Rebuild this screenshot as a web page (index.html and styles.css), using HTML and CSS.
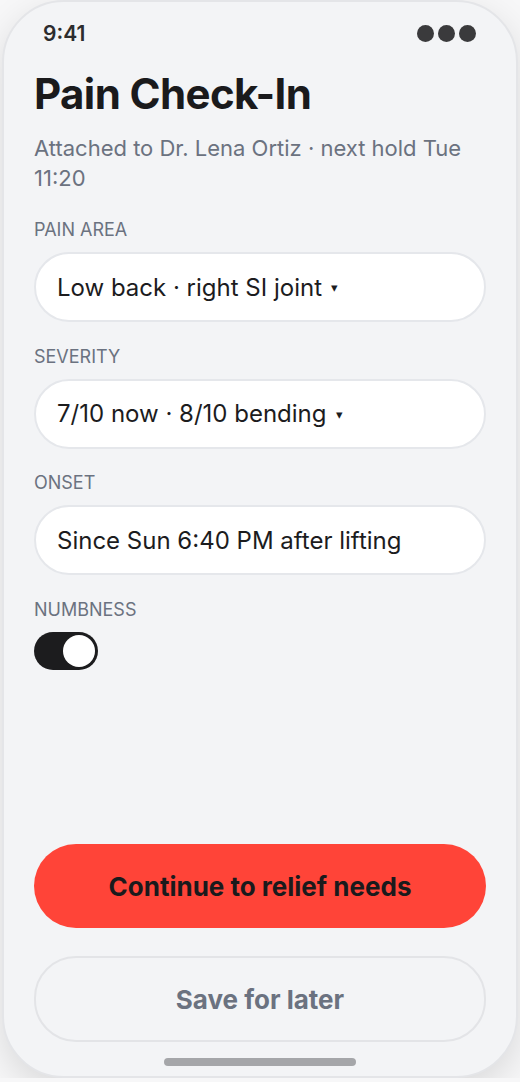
FILE: index.html
```html
<!DOCTYPE html>
<html lang="en">
<head>
  <meta charset="UTF-8">
  <meta name="viewport" content="width=device-width, initial-scale=1.0">
  <title>Pain Check-In</title>
  <link rel="stylesheet" href="styles.css">
</head>
<body>
  <div class="phone">
    <div class="status">
      <span class="time">9:41</span>
      <span class="dots"><i></i><i></i><i></i></span>
    </div>

    <h1 class="title">Pain Check-In</h1>
    <p class="sub">Attached to Dr. Lena Ortiz · next hold Tue 11:20</p>

    <div class="field">
      <div class="label">Pain area</div>
      <div class="input">Low back · right SI joint <span class="caret">▾</span></div>
    </div>
    <div class="field">
      <div class="label">Severity</div>
      <div class="input">7/10 now · 8/10 bending <span class="caret">▾</span></div>
    </div>
    <div class="field">
      <div class="label">Onset</div>
      <div class="input">Since Sun 6:40 PM after lifting</div>
    </div>
    <div class="field">
      <div class="label">Numbness</div>
      <div class="toggle on"><span class="knob"></span></div>
    </div>

    <div class="spacer"></div>

    <button class="btn primary">Continue to relief needs</button>
    <button class="btn ghost">Save for later</button>
    <div class="home"></div>
  </div>
</body>
</html>
```

FILE: styles.css
```css
* { box-sizing: border-box; }
body { margin: 0; background: #f7f7f8; font-family: Inter, "Noto Sans", sans-serif; color: #1c1c1e; }

.phone {
  width: 516px; height: 1078px; margin: 0 2px;
  background: #f3f4f6; border: 2px solid #e4e5e8; border-radius: 62px;
  box-shadow: 0 12px 36px rgba(0,0,0,0.12);
  padding: 0 30px; display: flex; flex-direction: column;
}

.status { display: flex; justify-content: space-between; align-items: center; height: 60px; padding: 2px 10px 0 9px; }
.time { font-size: 21px; font-weight: 600; color: #2c2c2e; }
.dots { display: flex; gap: 4px; }
.dots i { width: 17px; height: 17px; border-radius: 50%; background: #3a3a3c; }

.title { margin: 7px 0 0; font-size: 42px; font-weight: 700; letter-spacing: -0.6px; line-height: 50px; color: #1a1a1c; }
.sub { margin: 14px 0 27px; font-size: 22px; line-height: 30px; color: #6b7280; }

.field { margin-bottom: 24.5px; }
.label { font-size: 18px; line-height: 20px; text-transform: uppercase; color: #6b7280; margin-bottom: 12px; }
.input {
  height: 70px; background: #fff; border: 2px solid #e5e7eb; border-radius: 35px;
  display: flex; align-items: center; padding: 0 21px; font-size: 24px; color: #1c1c1e;
}
.caret { font-size: 13px; margin-left: 9px; }

.toggle { width: 64px; height: 38px; border-radius: 19px; background: #1c1c1e; padding: 3px; display: flex; justify-content: flex-end; }
.knob { width: 32px; height: 32px; border-radius: 50%; background: #fff; }

.spacer { flex: 1; }

.btn { width: 100%; height: 84px; border-radius: 42px; font-family: inherit; font-size: 26px; font-weight: 700; cursor: pointer; }
.primary { background: #ff4438; border: none; color: #1a1a1c; }
.ghost { margin-top: 28px; background: transparent; border: 2px solid #e3e4e7; color: #6b7280; height: 86px; }

.home { width: 192px; height: 8px; border-radius: 4px; background: #a5a6a9; margin: 16px auto 10px; }
```
